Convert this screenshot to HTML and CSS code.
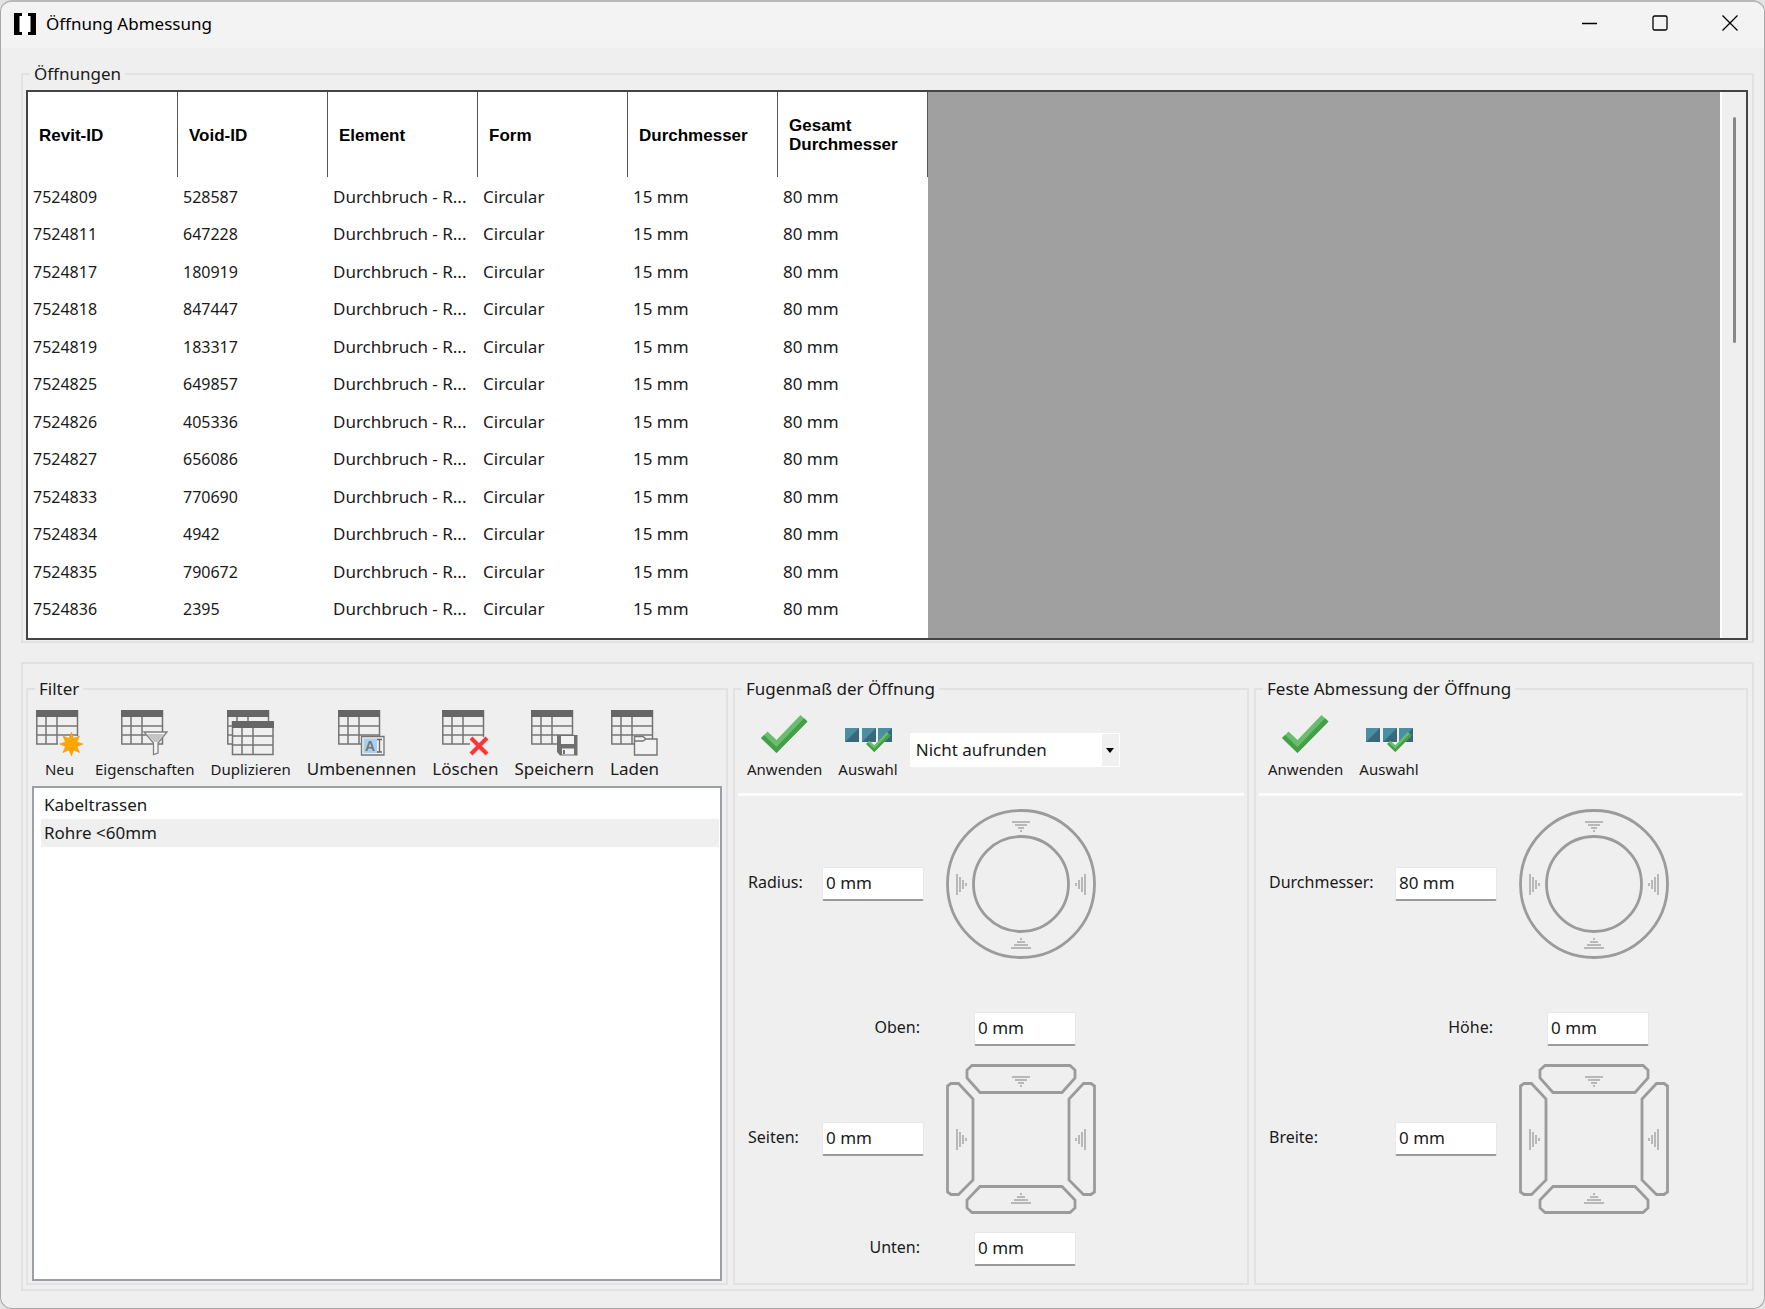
FILE: index.html
```html
<!DOCTYPE html>
<html lang="de">
<head>
  <meta charset="UTF-8">
  <meta name="viewport" content="width=device-width, initial-scale=1.0">
  <title>Öffnung Abmessung</title>
  <link rel="stylesheet" href="styles.css">
</head>
<body>

  <!-- shared icon parts -->
  <svg class="symbols" aria-hidden="true">
    <symbol id="table" viewBox="0 0 47 47">
      <g fill="none" stroke="#757575" stroke-width="1.5">
        <path d="M.8 .8H41.5V34H.8zM10 7V34M21 7V34M1 16H41M1 25H41"/>
      </g>
      <path fill="#666" d="M0 0H42V7H0z"/>
    </symbol>
    <symbol id="check" viewBox="0 0 47 38">
      <path fill="#6abd6e" d="M0 23L6.5 16.500 15.500 25 39.500 0 46.500 6.500 15.500 38z"/>
      <path fill="#43a047" d="M0 23L3 20 15.500 32 43 3.300 46.500 6.500 15.500 38z"/>
    </symbol>
    <symbol id="apply" viewBox="0 0 47 47">
      <use href="#check" y="5" width="47" height="38"/>
    </symbol>
    <symbol id="selection" viewBox="0 0 47 47">
      <path fill="#4b8ea3" d="M0 18h14v14H0zM17 18h14v14H17zM33 18h14v14H33z"/>
      <path fill="#38687a" d="M14 18v14H0zM31 18v14H17zM47 18v14H33z"/>
      <use href="#check" x="21" y="22" width="25" height="20"/>
    </symbol>
    <symbol id="arrows" viewBox="0 0 150 150">
      <g fill="none" stroke="#a6a6a6" stroke-width="1.5">
        <path d="M66 13H84M69 16H81M72 19H78M74 22H76"/>
        <path d="M74 130H76M71 133H79M68 136H82M65 139H85"/>
        <path d="M11 65V86M14 68V83M17 71V80M20 74V77"/>
        <path d="M139 65V86M136 68V83M133 71V80M130 74V77"/>
      </g>
    </symbol>
    <symbol id="round" viewBox="0 0 150 150">
      <g fill="none" stroke="#9b9b9b" stroke-width="2.800">
        <circle cx="75" cy="75" r="73.500"/>
        <circle cx="75" cy="75" r="47.500"/>
      </g>
      <use href="#arrows"/>
    </symbol>
    <symbol id="square" viewBox="0 0 150 150">
      <g fill="none" stroke="#9b9b9b" stroke-width="2.800">
        <path d="M26 1.500H124L129 6V14L116 28.500H34L21 14V6z"/>
        <path d="M34 122.500H116L129 136V144L124 148.500H26L21 144V136z"/>
        <path d="M1.500 22L5 19.500H12.500L27 35V116L12.500 130.500H5L1.500 128z"/>
        <path d="M148.500 22L145 19.500H137.500L123 35V116L137.500 130.500H145L148.500 128z"/>
      </g>
      <use href="#arrows"/>
    </symbol>
  </svg>

  <div class="window">
    <header class="titlebar">
      <svg class="logo" viewBox="0 0 22 22" aria-hidden="true">
        <path fill="#fff" d="M0 0H22V22H0z"/>
        <path d="M0 0H8V3H5.500V19H8V22H0zM22 0H14V3H16.500V19H14V22H22z"/>
      </svg>
      <h1>Öffnung Abmessung</h1>
      <div class="window-buttons">
        <button type="button" aria-label="Minimieren"><svg viewBox="0 0 16 16"><path d="M0 8.500H15"/></svg></button>
        <button type="button" aria-label="Maximieren"><svg viewBox="0 0 16 16"><rect x="1" y="1" width="14" height="14" rx="1.500"/></svg></button>
        <button type="button" aria-label="Schließen"><svg viewBox="0 0 16 16"><path d="M.5 .5L15.500 15.500M15.500 .5L.5 15.500"/></svg></button>
      </div>
    </header>

    <main>
      <fieldset class="group openings">
        <legend>Öffnungen</legend>
        <div class="grid">
          <table>
            <thead>
              <tr><th>Revit-ID</th><th>Void-ID</th><th>Element</th><th>Form</th><th>Durchmesser</th><th>Gesamt Durchmesser</th></tr>
            </thead>
            <tbody>
              <tr><td class="id">7524809</td><td class="id">528587</td><td>Durchbruch - R...</td><td>Circular</td><td>15 mm</td><td>80 mm</td></tr>
              <tr><td class="id">7524811</td><td class="id">647228</td><td>Durchbruch - R...</td><td>Circular</td><td>15 mm</td><td>80 mm</td></tr>
              <tr><td class="id">7524817</td><td class="id">180919</td><td>Durchbruch - R...</td><td>Circular</td><td>15 mm</td><td>80 mm</td></tr>
              <tr><td class="id">7524818</td><td class="id">847447</td><td>Durchbruch - R...</td><td>Circular</td><td>15 mm</td><td>80 mm</td></tr>
              <tr><td class="id">7524819</td><td class="id">183317</td><td>Durchbruch - R...</td><td>Circular</td><td>15 mm</td><td>80 mm</td></tr>
              <tr><td class="id">7524825</td><td class="id">649857</td><td>Durchbruch - R...</td><td>Circular</td><td>15 mm</td><td>80 mm</td></tr>
              <tr><td class="id">7524826</td><td class="id">405336</td><td>Durchbruch - R...</td><td>Circular</td><td>15 mm</td><td>80 mm</td></tr>
              <tr><td class="id">7524827</td><td class="id">656086</td><td>Durchbruch - R...</td><td>Circular</td><td>15 mm</td><td>80 mm</td></tr>
              <tr><td class="id">7524833</td><td class="id">770690</td><td>Durchbruch - R...</td><td>Circular</td><td>15 mm</td><td>80 mm</td></tr>
              <tr><td class="id">7524834</td><td class="id">4942</td><td>Durchbruch - R...</td><td>Circular</td><td>15 mm</td><td>80 mm</td></tr>
              <tr><td class="id">7524835</td><td class="id">790672</td><td>Durchbruch - R...</td><td>Circular</td><td>15 mm</td><td>80 mm</td></tr>
              <tr><td class="id">7524836</td><td class="id">2395</td><td>Durchbruch - R...</td><td>Circular</td><td>15 mm</td><td>80 mm</td></tr>
            </tbody>
          </table>
          <div class="scrollbar"><div class="thumb"></div></div>
        </div>
      </fieldset>

      <div class="settings">
        <fieldset class="group filter">
          <legend>Filter</legend>
          <div class="toolbar">
            <button type="button" class="small">
              <svg viewBox="0 0 47 47"><use href="#table"/><path fill="#efefef" d="M22 26H43V36H22z"/><path fill="#ffa500" stroke="#e39a1c" stroke-width=".6" d="M35.500 22L37.500 28.500 43.500 26 41 32 47 34 41 36.500 43.500 42.500 37.500 40 35.500 46 33 40 27 42.500 29.500 36.500 23.500 34 29.500 32 27 26 33 28.500z"/></svg>
              <span>Neu</span>
            </button>
            <button type="button" class="small">
              <svg viewBox="0 0 47 47"><use href="#table"/><path fill="#f6f6f6" stroke="#808080" stroke-width="1.300" d="M23 22H46L37 33V43L32.500 44.500V33z"/><path fill="#c4c4c4" d="M26 24H43L36.500 32H33z"/></svg>
              <span>Eigenschaften</span>
            </button>
            <button type="button" class="small">
              <svg viewBox="0 0 47 47"><use href="#table"/><path fill="#efefef" stroke="#757575" stroke-width="1.500" d="M5.500 12H46V44.500H5.500zM15 18V44M26 18V44M6 26H46M6 35H46"/><path fill="#666" d="M5 11H47V18H5z"/></svg>
              <span>Duplizieren</span>
            </button>
            <button type="button">
              <svg viewBox="0 0 47 47"><use href="#table"/><path fill="#efefef" stroke="#757575" stroke-width="1.300" d="M23.500 26.500H46V45H23.500z"/><path fill="#a9d1ee" d="M25.500 28.500H39V43H25.500z"/><text x="27" y="41" class="icon-letter">A</text><path fill="none" stroke="#666" stroke-width="1.300" d="M39 29.500H44M41.500 29.500V42M39 42H44"/></svg>
              <span>Umbenennen</span>
            </button>
            <button type="button">
              <svg viewBox="0 0 47 47"><use href="#table"/><path fill="#efefef" d="M28 27H43V36H28z"/><path fill="none" stroke="#ff3535" stroke-width="4" d="M29 28L45 44M45 28L29 44"/></svg>
              <span>Löschen</span>
            </button>
            <button type="button">
              <svg viewBox="0 0 47 47"><use href="#table"/><path fill="#707070" d="M26 25H46.500V45.500H29L26 42z"/><path fill="#f2f2f2" d="M30 26H43V34H30zM31 38.500H43V44.500H31z"/><path fill="#707070" d="M32 40H34V44H32z"/></svg>
              <span>Speichern</span>
            </button>
            <button type="button">
              <svg viewBox="0 0 47 47"><use href="#table"/><path fill="#f2f2f2" stroke="#757575" stroke-width="1.400" d="M23.500 45V26.500H32L35 29H46V45zM24 31H32L35 29"/></svg>
              <span>Laden</span>
            </button>
          </div>
          <select class="filter-list" size="2" aria-label="Filter">
            <option>Kabeltrassen</option>
            <option selected>Rohre &lt;60mm</option>
          </select>
        </fieldset>

        <fieldset class="group">
          <legend>Fugenmaß der Öffnung</legend>
          <div class="toolbar">
            <button type="button" class="small"><svg><use href="#apply"/></svg><span>Anwenden</span></button>
            <button type="button" class="small"><svg><use href="#selection"/></svg><span>Auswahl</span></button>
            <div class="combo">
              <select aria-label="Rundung">
                <option>Nicht aufrunden</option>
              </select>
              <span class="combo-arrow"><svg viewBox="0 0 8 5"><path d="M0 0H8L4 5z"/></svg></span>
            </div>
          </div>
          <hr>
          <div class="dims">
            <label for="radius">Radius:</label>
            <input id="radius" type="text" value="0 mm">
            <svg class="dial"><use href="#round"/></svg>
            <label class="wide above" for="oben">Oben:</label>
            <input class="edge above" id="oben" type="text" value="0 mm">
            <label for="seiten">Seiten:</label>
            <input id="seiten" type="text" value="0 mm">
            <svg class="dial"><use href="#square"/></svg>
            <label class="wide below" for="unten">Unten:</label>
            <input class="edge below" id="unten" type="text" value="0 mm">
          </div>
        </fieldset>

        <fieldset class="group">
          <legend>Feste Abmessung der Öffnung</legend>
          <div class="toolbar">
            <button type="button" class="small"><svg><use href="#apply"/></svg><span>Anwenden</span></button>
            <button type="button" class="small"><svg><use href="#selection"/></svg><span>Auswahl</span></button>
          </div>
          <hr>
          <div class="dims fixed">
            <label for="durchmesser">Durchmesser:</label>
            <input id="durchmesser" type="text" value="80 mm">
            <svg class="dial"><use href="#round"/></svg>
            <label class="wide above" for="hoehe">Höhe:</label>
            <input class="edge above" id="hoehe" type="text" value="0 mm">
            <label for="breite">Breite:</label>
            <input id="breite" type="text" value="0 mm">
            <svg class="dial"><use href="#square"/></svg>
          </div>
        </fieldset>
      </div>
    </main>
  </div>

</body>
</html>
```
FILE: styles.css
```css
* {
  box-sizing: border-box;
}

body {
  margin: 0;
  background-color: #e4e4e4;
  color: #1a1a1a;
  font-family: "Noto Sans", "Open Sans", sans-serif;
  font-size: 17px;
  line-height: 22px;
}

button,
input,
select {
  font: inherit;
  color: inherit;
}

.symbols {
  position: absolute;
  width: 0;
  height: 0;
}

.window {
  display: flex;
  flex-direction: column;
  min-height: 100vh;
  border: 1px solid #a8a8a8;
  border-top: 2px solid #b8b8b8;
  border-radius: 12px;
  background-color: #efefef;
  overflow: hidden;
}

/* title bar */
.titlebar {
  display: flex;
  align-items: center;
  height: 46px;
  padding: 0 0 2px 13px;
  background-color: #f3f3f3;
}

.logo {
  width: 22px;
  height: 22px;
}

.titlebar h1 {
  margin: 0 0 0 10px;
  font-size: 17px;
  font-weight: normal;
  color: #000;
}

.window-buttons {
  display: flex;
  height: 100%;
  margin-left: auto;
}

.window-buttons button {
  width: 70px;
  padding: 2px 0 0 2px;
  border: none;
  background: none;
}

.window-buttons svg {
  width: 16px;
  height: 16px;
  fill: none;
  stroke: #000;
  stroke-width: 1.3;
}

main {
  display: flex;
  flex: 1;
  flex-direction: column;
  gap: 19px;
  padding: 15px 10px 17px 20px;
}

.group {
  min-width: 0;
  margin: 0;
  padding: 0;
  border: 2px solid #e2e2e2;
}

.group legend {
  margin-left: 7px;
  padding: 0 4px;
}

/* openings table */
.openings {
  padding: 5px 4px 1px 3px;
}

.openings legend {
  margin-left: 4px;
}

.grid {
  display: flex;
  justify-content: space-between;
  border: 2px solid #444;
  background-color: #a0a0a0;
}

.grid table {
  width: 900px;
  table-layout: fixed;
  border-collapse: separate;
  border-spacing: 0;
  border-bottom: 11px solid #fff;
  background-color: #fff;
}

.grid th {
  height: 85px;
  padding: 1px 11px 0;
  border-right: 1px solid #555;
  color: #000;
  font: bold 17px/19px "Liberation Sans", Arial, sans-serif;
  text-align: left;
}

.grid td {
  height: 37px;
  padding: 2px 0 0 5px;
  white-space: nowrap;
}

.grid tr:nth-child(even) td {
  height: 38px;
}

.grid .id {
  font-size: 16px;
}

.scrollbar {
  width: 26px;
  padding: 25px 11px;
  border-left: 2px solid #fff;
  background-color: #efefef;
}

.thumb {
  width: 3px;
  height: 226px;
  border-radius: 2px;
  background-color: #888;
}

/* lower panels */
.settings {
  display: grid;
  flex: 1;
  grid-template-columns: 702fr 516fr 494fr;
  gap: 5px;
  padding: 14px 4px 4px 3px;
  border: 2px solid #e2e2e2;
}

.filter {
  display: flex;
  flex-direction: column;
}

.toolbar {
  display: flex;
  gap: 8px;
  padding: 10px 8px 0;
}

.toolbar button {
  display: flex;
  flex-direction: column;
  align-items: center;
  padding: 0 4px;
  border: none;
  background: none;
  line-height: 24px;
}

.toolbar button.small {
  font-size: 15px;
}

.toolbar button svg {
  width: 47px;
  height: 47px;
  margin: 0 -4px;
}

.icon-letter {
  fill: #777;
  font: bold 14px "Liberation Sans", sans-serif;
}

.filter-list {
  flex: 1;
  margin: 5px 4px 2px;
  padding: 3px 1px 1px 7px;
  border: 2px solid #9aa0a6;
  border-radius: 0;
  background-color: #fff;
  outline: none;
}

.filter-list option {
  min-height: 28px;
  padding: 2px 3px 3px;
  color: #1a1a1a;
}

.filter-list option:checked {
  background: #efefef linear-gradient(#efefef, #efefef);
}

.combo {
  position: relative;
  width: 210px;
  height: 34px;
  margin-top: 23px;
}

.combo select {
  width: 100%;
  height: 100%;
  padding: 0 24px 0 6px;
  border: none;
  border-radius: 0;
  background-color: #fff;
  appearance: none;
}

.combo-arrow {
  position: absolute;
  top: 1px;
  right: 1px;
  bottom: 1px;
  display: flex;
  align-items: center;
  justify-content: center;
  width: 17px;
  background-color: #f0f0f0;
  pointer-events: none;
}

.combo-arrow svg {
  width: 8px;
  height: 5px;
}

.group hr {
  height: 3px;
  margin: 12px 3px 0;
  border: none;
  background-color: #fcfcfc;
}

.dims {
  display: grid;
  grid-template-columns: 74px 102px 172px;
  align-items: center;
  padding: 13px 0 0 13px;
}

.dims.fixed {
  grid-template-columns: 126px 102px 172px;
}

.dims label {
  padding-bottom: 5px;
  font-size: 16px;
}

.dims input {
  width: 102px;
  height: 34px;
  padding: 0 3px 2px;
  border: 1px solid #e8e8e8;
  border-bottom: 2px solid #9a9a9a;
  border-radius: 2px;
  background-color: #fff;
}

.dims .wide {
  grid-column: 1 / 3;
  padding-right: 4px;
  text-align: right;
}

.dims .edge {
  margin-left: 50px;
}

.dims .dial {
  width: 150px;
  height: 150px;
  margin-left: 22px;
}

.dims .above {
  margin-top: 53px;
  margin-bottom: 18px;
}

.dims .below {
  margin-top: 18px;
}
```
